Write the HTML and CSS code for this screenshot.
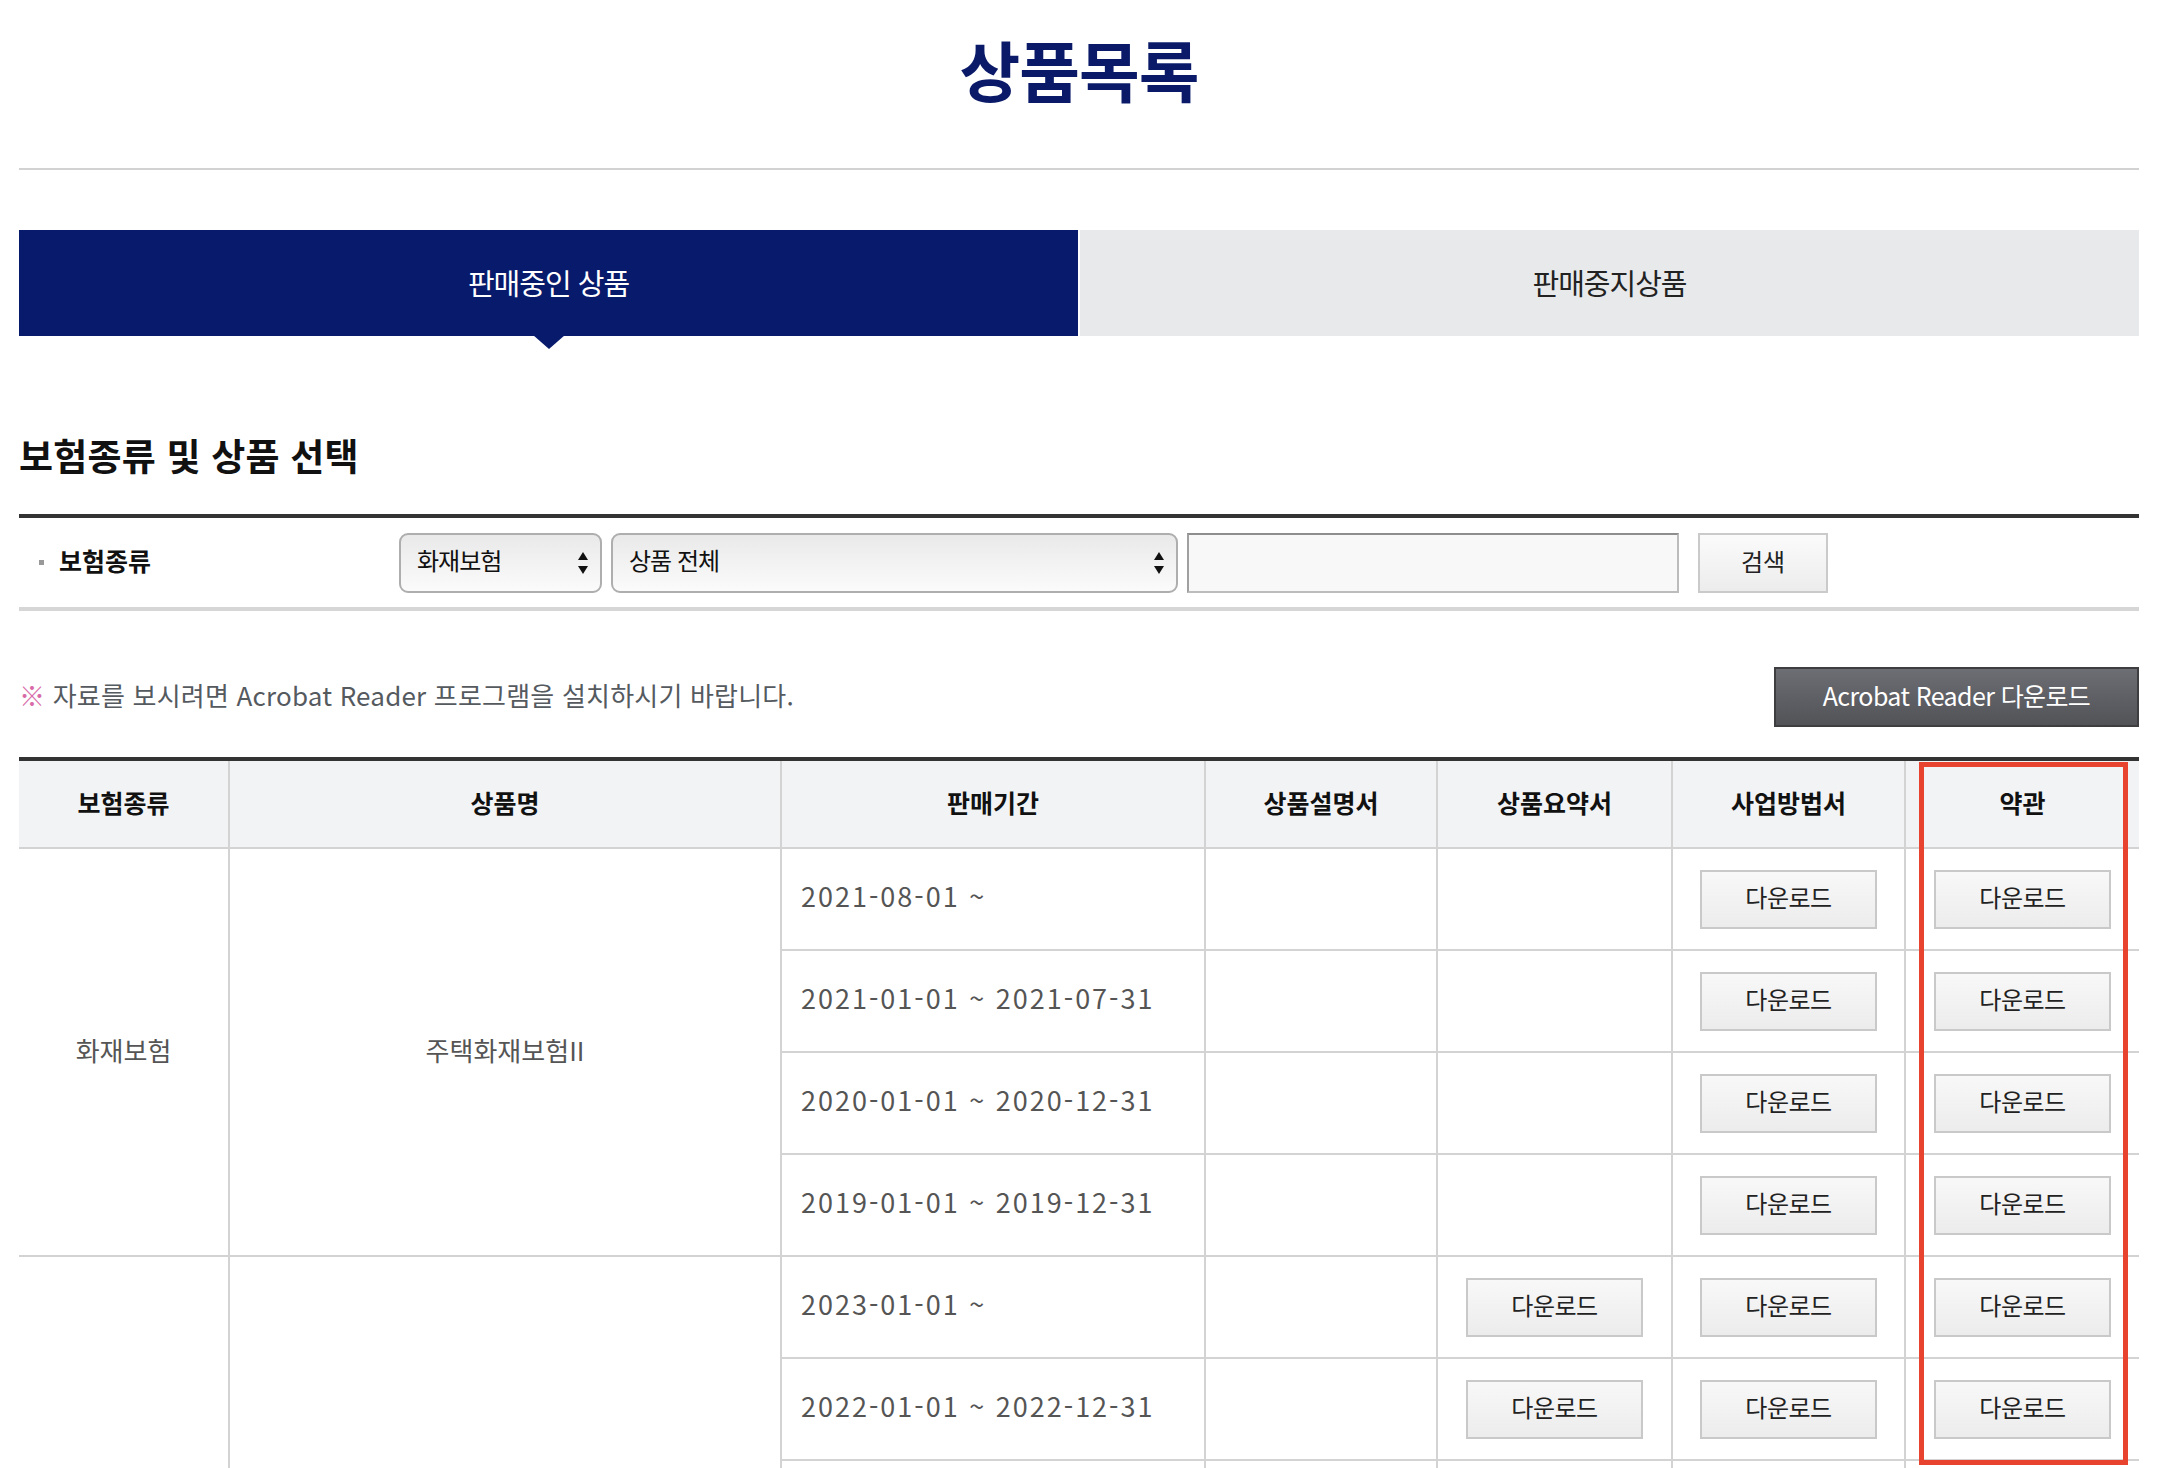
FILE: index.html
```html
<!DOCTYPE html>
<html lang="ko">
<head>
<meta charset="utf-8">
<title>상품목록</title>
<link rel="stylesheet" href="styles.css">
</head>
<body>
<div class="page">
  <h1 class="page-title">상품목록</h1>

  <div class="tabs">
    <div class="tab tab-active">판매중인 상품</div>
    <div class="tab">판매중지상품</div>
  </div>

  <h2 class="section-title">보험종류 및 상품 선택</h2>

  <div class="search-box">
    <div class="search-label"><span class="bullet"></span>보험종류</div>
    <div class="select select-type">
      <span>화재보험</span>
      <svg class="select-arrows" width="10" height="22" viewBox="0 0 10 22"><path d="M5 0 L10 8 L0 8 Z M0 14 L10 14 L5 22 Z" fill="#111"/></svg>
    </div>
    <div class="select select-product">
      <span>상품 전체</span>
      <svg class="select-arrows" width="10" height="22" viewBox="0 0 10 22"><path d="M5 0 L10 8 L0 8 Z M0 14 L10 14 L5 22 Z" fill="#111"/></svg>
    </div>
    <input class="search-input" type="text" aria-label="상품명 검색">
    <button class="search-btn" type="button">검색</button>
  </div>

  <div class="notice-row">
    <p class="notice"><span class="mark">※</span> 자료를 보시려면 Acrobat Reader 프로그램을 설치하시기 바랍니다.</p>
    <button class="acrobat-btn" type="button">Acrobat Reader 다운로드</button>
  </div>

  <div class="table-wrap">
    <table class="product-table">
      <thead>
        <tr>
          <th class="c1">보험종류</th>
          <th class="c2">상품명</th>
          <th class="c3">판매기간</th>
          <th class="c4">상품설명서</th>
          <th class="c5">상품요약서</th>
          <th class="c6">사업방법서</th>
          <th class="c7">약관</th>
        </tr>
      </thead>
      <tbody>
        <tr>
          <td class="txt" rowspan="4">화재보험</td>
          <td class="txt" rowspan="4">주택화재보험II</td>
          <td class="period">2021-08-01 ~</td>
          <td></td>
          <td></td>
          <td><button class="dl-btn" type="button">다운로드</button></td>
          <td><button class="dl-btn" type="button">다운로드</button></td>
        </tr>
        <tr>
          <td class="period">2021-01-01 ~ 2021-07-31</td>
          <td></td>
          <td></td>
          <td><button class="dl-btn" type="button">다운로드</button></td>
          <td><button class="dl-btn" type="button">다운로드</button></td>
        </tr>
        <tr>
          <td class="period">2020-01-01 ~ 2020-12-31</td>
          <td></td>
          <td></td>
          <td><button class="dl-btn" type="button">다운로드</button></td>
          <td><button class="dl-btn" type="button">다운로드</button></td>
        </tr>
        <tr>
          <td class="period">2019-01-01 ~ 2019-12-31</td>
          <td></td>
          <td></td>
          <td><button class="dl-btn" type="button">다운로드</button></td>
          <td><button class="dl-btn" type="button">다운로드</button></td>
        </tr>
        <tr>
          <td class="txt" rowspan="6">화재보험</td>
          <td class="txt" rowspan="6">무배당 주택화재보험</td>
          <td class="period">2023-01-01 ~</td>
          <td></td>
          <td><button class="dl-btn" type="button">다운로드</button></td>
          <td><button class="dl-btn" type="button">다운로드</button></td>
          <td><button class="dl-btn" type="button">다운로드</button></td>
        </tr>
        <tr>
          <td class="period">2022-01-01 ~ 2022-12-31</td>
          <td></td>
          <td><button class="dl-btn" type="button">다운로드</button></td>
          <td><button class="dl-btn" type="button">다운로드</button></td>
          <td><button class="dl-btn" type="button">다운로드</button></td>
        </tr>
        <tr>
          <td class="period">2021-08-01 ~ 2021-12-31</td>
          <td></td>
          <td><button class="dl-btn" type="button">다운로드</button></td>
          <td><button class="dl-btn" type="button">다운로드</button></td>
          <td><button class="dl-btn" type="button">다운로드</button></td>
        </tr>
        <tr>
          <td class="period">2021-01-01 ~ 2021-07-31</td>
          <td></td>
          <td><button class="dl-btn" type="button">다운로드</button></td>
          <td><button class="dl-btn" type="button">다운로드</button></td>
          <td><button class="dl-btn" type="button">다운로드</button></td>
        </tr>
        <tr>
          <td class="period">2020-01-01 ~ 2020-12-31</td>
          <td></td>
          <td><button class="dl-btn" type="button">다운로드</button></td>
          <td><button class="dl-btn" type="button">다운로드</button></td>
          <td><button class="dl-btn" type="button">다운로드</button></td>
        </tr>
        <tr>
          <td class="period">2019-01-01 ~ 2019-12-31</td>
          <td></td>
          <td><button class="dl-btn" type="button">다운로드</button></td>
          <td><button class="dl-btn" type="button">다운로드</button></td>
          <td><button class="dl-btn" type="button">다운로드</button></td>
        </tr>
      </tbody>
    </table>
    <div class="highlight-box"></div>
  </div>
</div>
</body>
</html>
```

FILE: styles.css
```css
* {
  box-sizing: border-box;
}

html, body {
  margin: 0;
  padding: 0;
  background: #fff;
}

body {
  font-family: "Noto Sans CJK KR", "Noto Sans", sans-serif;
  color: #222;
}

.page {
  width: 2120px;
  margin-left: 19px;
}

/* Title */
.page-title {
  margin: 0;
  height: 170px;
  padding-top: 28px;
  line-height: 80px;
  font-size: 66px;
  font-weight: 700;
  letter-spacing: -1px;
  text-align: center;
  color: #0a1a68;
  border-bottom: 2px solid #d2d2d2;
}

/* Tabs */
.tabs {
  display: flex;
  gap: 2px;
  margin-top: 60px;
  height: 106px;
}

.tab {
  position: relative;
  flex: 1;
  display: flex;
  align-items: center;
  justify-content: center;
  padding-bottom: 3px;
  background: #e8e9eb;
  color: #222;
  font-size: 29px;
  letter-spacing: -1px;
}

.tab-active {
  background: #071a6b;
  color: #fff;
}

.tab-active::after {
  content: "";
  position: absolute;
  left: 50%;
  bottom: -13px;
  margin-left: -16px;
  border-left: 16px solid transparent;
  border-right: 16px solid transparent;
  border-top: 14px solid #071a6b;
}

/* Section heading */
.section-title {
  margin: 94px 0 34px;
  line-height: 50px;
  font-size: 37px;
  font-weight: 700;
  color: #111;
  letter-spacing: 0.2px;
}

/* Search form */
.search-box {
  display: flex;
  align-items: center;
  height: 97px;
  border-top: 4px solid #333;
  border-bottom: 4px solid #d6d6d6;
  padding-left: 20px;
}

.search-label {
  display: flex;
  align-items: center;
  width: 360px;
  padding-bottom: 5px;
  font-size: 25px;
  font-weight: 700;
  color: #111;
}

.bullet {
  display: inline-block;
  width: 5px;
  height: 5px;
  background: #999;
  margin: 4px 15px 0 0;
}

.select {
  display: flex;
  align-items: center;
  justify-content: space-between;
  height: 60px;
  padding: 0 12px 0 16px;
  border: 2px solid #aeaeae;
  border-radius: 9px;
  background: linear-gradient(#e9e9e9, #f3f3f3 55%, #fbfbfb);
  font-size: 24px;
  color: #111;
  letter-spacing: -1px;
}

.select span {
  padding-bottom: 6px;
}

.select-type {
  width: 203px;
  margin-right: 9px;
}

.select-product {
  width: 567px;
  margin-right: 9px;
}

.search-input {
  width: 492px;
  height: 60px;
  margin: 0 19px 0 0;
  border: 2px solid #bcbcbc;
  border-top-color: #8e8e8e;
  border-left-color: #a0a0a0;
  background: #f8f8f8;
  font-family: inherit;
}

.search-btn {
  width: 130px;
  height: 60px;
  border: 2px solid #cacaca;
  background: linear-gradient(#fbfbfb, #ececec);
  font-family: inherit;
  font-size: 24px;
  color: #222;
  padding: 0 0 5px;
}

/* Notice row */
.notice-row {
  display: flex;
  align-items: center;
  justify-content: space-between;
  margin-top: 56px;
}

.notice {
  margin: 0;
  padding-bottom: 6px;
  font-size: 26px;
  letter-spacing: 0.2px;
  color: #555a5f;
}

.mark {
  color: #d86aa8;
}

.acrobat-btn {
  width: 365px;
  height: 60px;
  padding: 0 0 5px;
  border: 2px solid #3e3e40;
  background: linear-gradient(#6d6e73, #525357);
  color: #fff;
  font-family: inherit;
  font-size: 25px;
  letter-spacing: -0.6px;
}

/* Table */
.table-wrap {
  position: relative;
  margin-top: 30px;
}

.product-table {
  width: 2120px;
  table-layout: fixed;
  border-collapse: separate;
  border-spacing: 0;
  border-top: 4px solid #333;
}

.product-table th,
.product-table td {
  padding: 0;
  border-right: 2px solid #d3d3d3;
  border-bottom: 2px solid #d3d3d3;
  text-align: center;
  vertical-align: middle;
}

.product-table th:last-child,
.product-table td:last-child {
  border-right: 0;
}

.product-table th {
  height: 88px;
  padding-bottom: 4px;
  background: #f2f3f5;
  font-size: 25px;
  font-weight: 700;
  color: #111;
}

.product-table td {
  height: 102px;
  font-size: 26px;
  color: #555;
}

.product-table td.txt {
  padding-bottom: 6px;
}

.c1 { width: 211px; }
.c2 { width: 552px; }
.c3 { width: 424px; }
.c4 { width: 232px; }
.c5 { width: 235px; }
.c6 { width: 233px; }
.c7 { width: 233px; }

.product-table td.period {
  text-align: left;
  padding: 0 0 7px 19px;
  font-size: 27px;
  letter-spacing: 2px;
}

.dl-btn {
  width: 177px;
  height: 59px;
  padding: 0 0 5px;
  border: 2px solid #c9c9c9;
  background: linear-gradient(#f8f8f8, #ececec);
  font-family: inherit;
  font-size: 24px;
  color: #222;
  letter-spacing: -0.5px;
}

.highlight-box {
  position: absolute;
  left: 1900px;
  top: 5px;
  width: 209px;
  height: 703px;
  border: 5px solid #e8432e;
  pointer-events: none;
}
```
